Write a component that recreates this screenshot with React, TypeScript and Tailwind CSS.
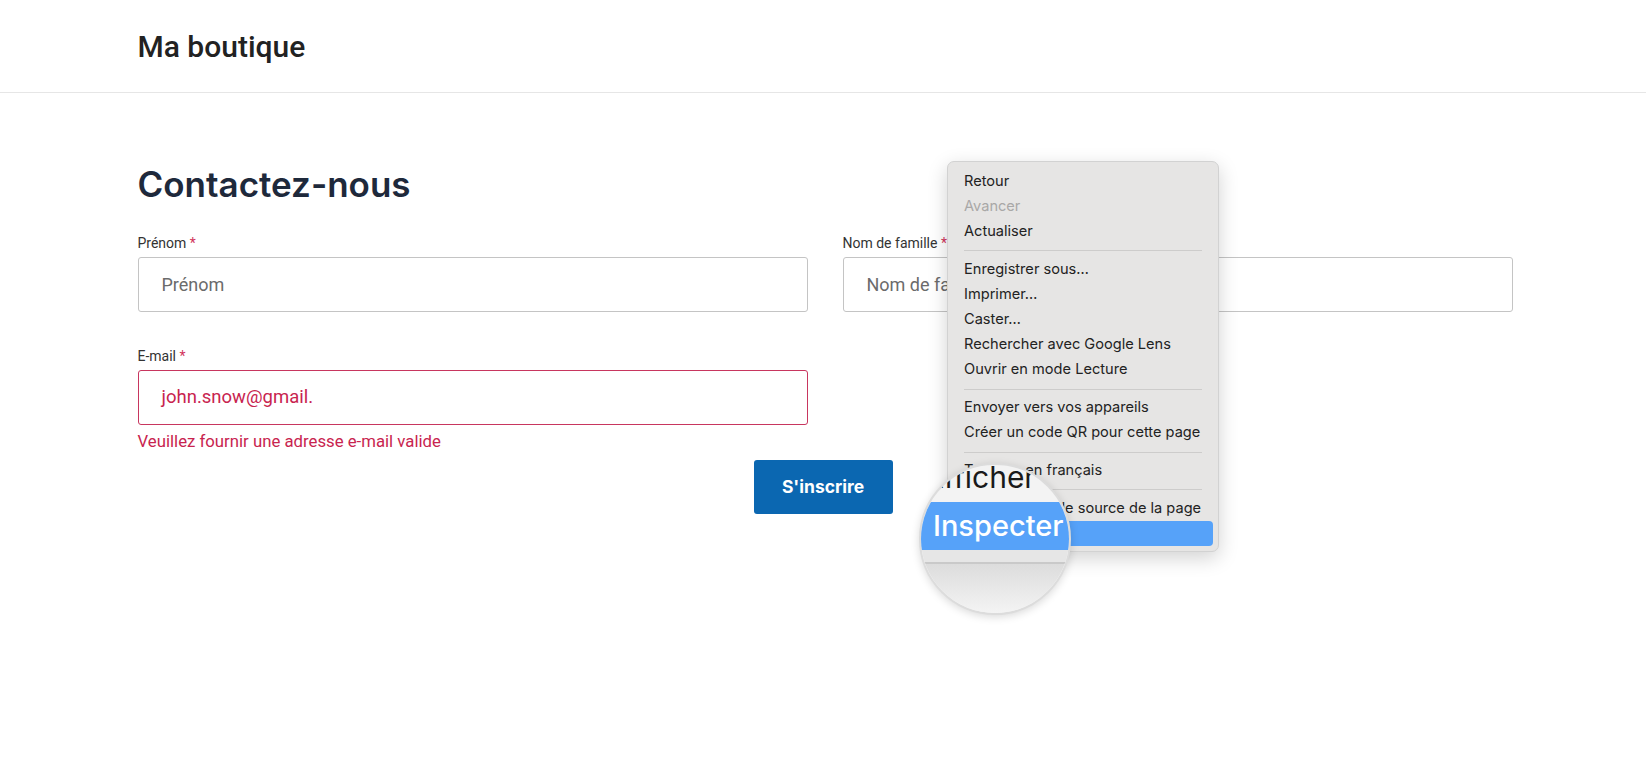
import React from 'react'

const menu: (string | { label: string; disabled?: boolean; active?: boolean })[] = [
  'Retour',
  { label: 'Avancer', disabled: true },
  'Actualiser',
  '-',
  'Enregistrer sous…',
  'Imprimer…',
  'Caster…',
  'Rechercher avec Google Lens',
  'Ouvrir en mode Lecture',
  '-',
  'Envoyer vers vos appareils',
  'Créer un code QR pour cette page',
  '-',
  'Traduire en français',
  '-',
  'Afficher le code source de la page',
  { label: 'Inspecter', active: true },
]

function Field({ label, placeholder }: { label: string; placeholder: string }) {
  return (
    <div className="flex flex-col">
      <label className="text-[14px] leading-[20px] text-[#333]">
        {label} <span className="text-[#d1335b]">*</span>
      </label>
      <div className="mt-[4px] flex h-[55px] items-center rounded-[3px] border border-[#c4c4c4] px-[23px] text-[18px] text-[#6b6b6b]">
        {placeholder}
      </div>
    </div>
  )
}

function ContextMenu() {
  return (
    <div className="absolute left-[947px] top-[161px] w-[272px] rounded-[7px] border border-[#d2d2d2] bg-[#e6e5e4] pt-[7px] pb-[5px] shadow-[0_6px_20px_rgba(0,0,0,0.18)] font-['Inter',sans-serif] text-[14.6px] text-[#222]">
      {menu.map((item, i) => {
        if (item === '-') {
          return (
            <div key={i} className="flex h-[12.5px] items-center px-[16px]">
              <div className="h-px w-full bg-[#cdcccb]" />
            </div>
          )
        }
        const it = typeof item === 'string' ? { label: item } : item
        return (
          <div key={i} className="px-[5px]">
            <div
              className={`flex h-[25.2px] items-center whitespace-nowrap rounded-[4px] px-[11px] ${
                it.active ? 'bg-[#56a2f9] text-white' : ''
              } ${it.disabled ? 'text-[#a9a8a7]' : ''}`}
            >
              {it.label}
            </div>
          </div>
        )
      })}
    </div>
  )
}

function Magnifier() {
  return (
    <div className="absolute left-[919px] top-[463px] h-[152px] w-[152px] overflow-hidden rounded-full border-2 border-[#dcdcdc] bg-[#f3f3f3] shadow-[0_2px_8px_rgba(0,0,0,0.15)] font-['Inter',sans-serif]">
      <div className="flex h-[37px] items-end whitespace-nowrap pl-[2px] text-[30px] leading-none text-[#1a1a1a]">
        <span className="mb-[10px]">Afficher</span>
      </div>
      <div className="flex h-[48px] items-center whitespace-nowrap bg-[#56a2f9] pl-[12px] text-[29px] font-medium text-white">
        Inspecter
      </div>
      <div className="h-[12px] bg-[#e6e6e6]" />
      <div className="h-[2px] bg-[#c9c9c9]" />
      <div className="h-[53px] bg-gradient-to-b from-[#dcdcdc] to-[#f6f6f6]" />
    </div>
  )
}

export default function App() {
  return (
    <div className="relative min-h-[761px] bg-white font-['Roboto',sans-serif]">
      <header className="h-[93px] border-b border-[#e6e6e6]">
        <div className="mx-auto flex h-full w-[1379px] items-center pl-[4px]">
          <span className="text-[30px] font-medium text-[#222]">Ma boutique</span>
        </div>
      </header>

      <main className="mx-auto w-[1379px] pl-[4px] pt-[70px]">
        <h1 className="font-['Inter',sans-serif] text-[35px] font-semibold leading-[43px] text-[#1e293b]">
          Contactez-nous
        </h1>
        <div className="mt-[27px] grid grid-cols-2 gap-x-[35px]">
          <Field label="Prénom" placeholder="Prénom" />
          <Field label="Nom de famille" placeholder="Nom de famille" />
          <div className="mt-[34px] flex flex-col">
            <label className="text-[14px] leading-[20px] text-[#333]">
              E-mail <span className="text-[#d1335b]">*</span>
            </label>
            <div className="mt-[4px] flex h-[55px] items-center rounded-[3px] border border-[#c8365f] px-[23px] text-[18.5px] text-[#c8244f]">
              john.snow@gmail.
            </div>
            <p className="mt-[5px] text-[16.75px] leading-[22px] text-[#c8244f]">
              Veuillez fournir une adresse e-mail valide
            </p>
          </div>
        </div>
        <div className="mt-[8px] flex justify-center pr-[4px]">
          <button className="h-[54px] w-[139px] rounded-[3px] bg-[#0b67b1] font-['Inter',sans-serif] text-[17.5px] font-bold text-white">
            S'inscrire
          </button>
        </div>
      </main>

      <ContextMenu />
      <Magnifier />
    </div>
  )
}
